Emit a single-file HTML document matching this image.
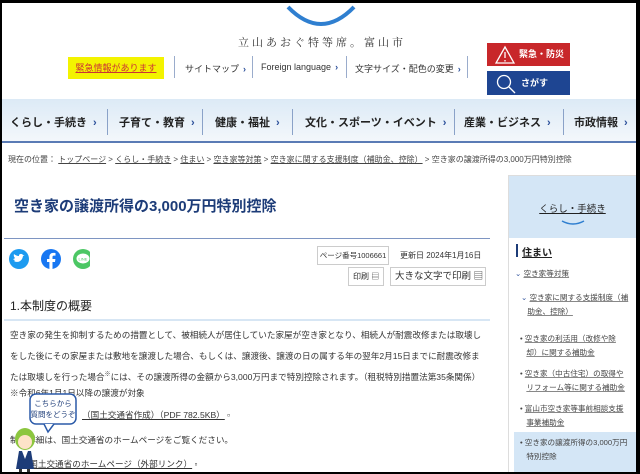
<!DOCTYPE html>
<html><head><meta charset="utf-8"><style>
*{margin:0;padding:0;box-sizing:border-box}
body{width:640px;height:474px;overflow:hidden;background:#000;font-family:"Liberation Sans","Noto Sans CJK JP",sans-serif;color:#333;position:relative}
#pg{position:absolute;left:2px;top:3px;width:634px;height:469px;background:#fff;overflow:hidden}
.a{position:absolute;white-space:nowrap}
u{text-decoration:underline}
.nav{position:absolute;left:0;top:96px;width:634px;height:44px;background:linear-gradient(#dceaf6,#f3f7fb);border-bottom:2px solid #5a7bb5}
.nv{position:absolute;top:15px;font-size:11px;font-weight:bold;color:#222}
.nv b{color:#2b4f9a;margin-left:6px}
.sep{position:absolute;top:10px;width:1px;height:26px;background:#8aa2c8}
.tl{font-size:9px;color:#333}
.tl b{color:#2b4f9a;margin-left:4px}
.vs{position:absolute;top:53px;width:1px;height:22px;background:#9aaccc}
.p{font-size:8.6px;color:#333}
.sb{font-size:7.6px;color:#444;line-height:14px}
.sb u{text-decoration-color:#888}
</style></head><body><div id="pg">
<svg class="a" style="left:278px;top:0" width="82" height="28"><path d="M8 4 Q41 38 74 4" stroke="#2f7fd0" stroke-width="4" fill="none"/></svg>
<div class="a" style="left:236px;top:31px;font-family:'Noto Serif CJK SC',serif;font-size:11px;letter-spacing:3px;color:#333">立山あおぐ特等席。富山市</div>
<div class="a" style="left:66px;top:54px;width:96px;height:22px;background:#f3f300;font-size:9px;color:#c33;text-align:center;line-height:22px"><u>緊急情報があります</u></div>
<div class="vs" style="left:172px"></div>
<div class="a tl" style="left:183px;top:59px">サイトマップ<b>›</b></div>
<div class="vs" style="left:250px"></div>
<div class="a tl" style="left:259px;top:59px">Foreign language<b>›</b></div>
<div class="vs" style="left:344px"></div>
<div class="a tl" style="left:353px;top:59px">文字サイズ・配色の変更<b>›</b></div>
<div class="vs" style="left:465px"></div>
<div class="a" style="left:485px;top:40px;width:83px;height:23px;background:#c8272a;color:#fff;font-size:9px;font-weight:bold;line-height:23px;padding-left:32px">緊急・防災
<svg class="a" style="left:8px;top:2px" width="20" height="19"><path d="M10 2 L19 18 L1 18 Z" stroke="#fff" stroke-width="1.3" fill="none"/><path d="M10 7v6M10 15v1.5" stroke="#fff" stroke-width="1.3"/></svg></div>
<div class="a" style="left:485px;top:68px;width:83px;height:24px;background:#1e4592;color:#fff;font-size:9px;font-weight:bold;line-height:24px;padding-left:34px">さがす
<svg class="a" style="left:8px;top:2px" width="22" height="21"><circle cx="9" cy="9" r="6.5" stroke="#fff" stroke-width="1.3" fill="none"/><path d="M14 14l6 6" stroke="#fff" stroke-width="1.3"/></svg></div>
<div class="nav">
<div class="nv" style="left:8px">くらし・手続き<b>›</b></div><div class="sep" style="left:105px"></div>
<div class="nv" style="left:117px">子育て・教育<b>›</b></div><div class="sep" style="left:200px"></div>
<div class="nv" style="left:213px">健康・福祉<b>›</b></div><div class="sep" style="left:290px"></div>
<div class="nv" style="left:303px">文化・スポーツ・イベント<b>›</b></div><div class="sep" style="left:452px"></div>
<div class="nv" style="left:462px">産業・ビジネス<b>›</b></div><div class="sep" style="left:561px"></div>
<div class="nv" style="left:572px">市政情報<b>›</b></div>
</div>
<div class="a" style="left:6px;top:151px;font-size:8px;color:#444">現在の位置： <u>トップページ</u> &gt; <u>くらし・手続き</u> &gt; <u>住まい</u> &gt; <u>空き家等対策</u> &gt; <u>空き家に関する支援制度（補助金、控除）</u> &gt; 空き家の譲渡所得の3,000万円特別控除</div>
<div class="a" style="left:12px;top:192px;font-size:15px;font-weight:bold;color:#1d3c78">空き家の譲渡所得の3,000万円特別控除</div>
<div class="a" style="left:2px;top:235px;width:486px;height:1px;background:#7e95c2"></div>
<svg class="a" style="left:6px;top:244px" width="82" height="24"><circle cx="11" cy="12" r="10" fill="#1d9bf0"/><path d="M6 14c3 2 8 1 9-5l1.5-1-1.5 0c-1-1.5-3-1.5-4 0v1c-2 0-4-1-5-2-.5 2 0 3 1 4-1 1-2 1-2 1 1 1 2 1 2 1" fill="#fff"/><circle cx="43" cy="12" r="10" fill="#1877f2"/><path d="M44.5 22v-7h2.5l.4-3h-2.9v-2c0-.8.3-1.4 1.4-1.4h1.6V6c-.3 0-1.2-.1-2.3-.1-2.3 0-3.8 1.4-3.8 4v2.1H39v3h2.4v7z" fill="#fff"/><circle cx="75" cy="12" r="10" fill="#4cc764"/><ellipse cx="75" cy="11.5" rx="6.5" ry="5" fill="#fff"/><text x="75" y="13.5" font-size="4" fill="#4cc764" text-anchor="middle" font-family="Liberation Sans">LINE</text></svg>
<div class="a" style="left:315px;top:243px;width:72px;height:19px;border:1px solid #ccc;font-size:7.5px;line-height:17px;text-align:center">ページ番号1006661</div>
<div class="a" style="left:398px;top:247px;font-size:8px">更新日 2024年1月16日</div>
<div class="a" style="left:346px;top:264px;width:36px;height:19px;border:1px solid #ccc;font-size:8px;line-height:17px;padding-left:4px">印刷 ▤</div>
<div class="a" style="left:388px;top:264px;width:96px;height:19px;border:1px solid #ccc;font-size:9.5px;line-height:17px;padding-left:4px">大きな文字で印刷 ▤</div>
<div class="a" style="left:8px;top:294px;font-size:12px;color:#222">1.本制度の概要</div>
<div class="a" style="left:2px;top:316px;width:486px;height:2px;background:#d7e6f4"></div>
<div class="a p" style="left:8px;top:322px;line-height:21px">空き家の発生を抑制するための措置として、被相続人が居住していた家屋が空き家となり、相続人が耐震改修または取壊し<br>をした後にその家屋または敷地を譲渡した場合、もしくは、譲渡後、譲渡の日の属する年の翌年2月15日までに耐震改修ま<br>たは取壊しを行った場合<span style="font-size:6px;position:relative;top:-4px;line-height:0">※</span>には、その譲渡所得の金額から3,000万円まで特別控除されます。（租税特別措置法第35条関係）</div>
<div class="a p" style="left:8px;top:384px">※令和6年1月1日以降の譲渡が対象</div>
<div class="a p" style="left:80px;top:406px"><u>（国土交通省作成）（PDF 782.5KB）</u> ▫</div>
<div class="a p" style="left:8px;top:431px">制度詳細は、国土交通省のホームページをご覧ください。</div>
<div class="a p" style="left:22px;top:455px"><span style="color:#2b4f9a">›</span> <u>国土交通省のホームページ（外部リンク）</u> ▫</div>
<svg class="a" style="left:10px;top:388px" width="70" height="86"><rect x="18" y="3" width="46" height="30" rx="6" fill="#fff" stroke="#2b5aa8" stroke-width="1.5"/><path d="M32 33l4 8 6-8" fill="#fff" stroke="#2b5aa8" stroke-width="1.5"/><text x="41" y="15" font-size="7.5" fill="#1d3c78" text-anchor="middle" font-family="Noto Sans CJK JP">こちらから</text><text x="41" y="26" font-size="7.5" fill="#1d3c78" text-anchor="middle" font-family="Noto Sans CJK JP">質問をどうぞ</text><ellipse cx="13" cy="48" rx="10" ry="11" fill="#8cc63f"/><ellipse cx="13" cy="51" rx="7" ry="7" fill="#fde3c8"/><path d="M7 60h12l3 18H4z" fill="#1d3c78"/><path d="M10 60l3 8 3-8" fill="#fff"/><rect x="7" y="78" width="3" height="6" fill="#333"/><rect x="15" y="78" width="3" height="6" fill="#333"/></svg>
<div class="a" style="left:506px;top:172px;width:128px;height:300px;border:1px solid #ddd;border-right:none"></div>
<div class="a" style="left:507px;top:173px;width:127px;height:62px;background:#d4e6f6"></div>
<div class="a" style="left:507px;top:198px;width:127px;text-align:center;font-size:9.5px;color:#222"><u>くらし・手続き</u></div>
<svg class="a" style="left:558px;top:216px" width="26" height="8"><path d="M2 2 Q13 8 24 2" stroke="#2f7fd0" stroke-width="1.5" fill="none"/></svg>
<div class="a" style="left:514px;top:241px;width:2px;height:13px;background:#1d3c78"></div>
<div class="a" style="left:520px;top:241px;font-size:10px;font-weight:bold;color:#222"><u>住まい</u></div>
<div class="a sb" style="left:513px;top:264px"><span style="color:#2b4f9a">⌄</span> <u>空き家等対策</u></div>
<div class="a sb" style="left:519px;top:288px"><span style="color:#2b4f9a">⌄</span> <u>空き家に関する支援制度（補</u><br>&nbsp;&nbsp;&nbsp;<u>助金、控除）</u></div>
<div class="a sb" style="left:518px;top:329px">• <u>空き家の利活用（改修や除</u><br>&nbsp;&nbsp;&nbsp;<u>却）に関する補助金</u></div>
<div class="a sb" style="left:518px;top:364px">• <u>空き家（中古住宅）の取得や</u><br>&nbsp;&nbsp;&nbsp;<u>リフォーム等に関する補助金</u></div>
<div class="a sb" style="left:518px;top:399px">• <u>富山市空き家等事前相談支援</u><br>&nbsp;&nbsp;&nbsp;<u>事業補助金</u></div>
<div class="a" style="left:512px;top:429px;width:122px;height:45px;background:#d4e6f6"></div>
<div class="a sb" style="left:518px;top:433px">• 空き家の譲渡所得の3,000万円<br>&nbsp;&nbsp;&nbsp;特別控除</div>
</div></body></html>
